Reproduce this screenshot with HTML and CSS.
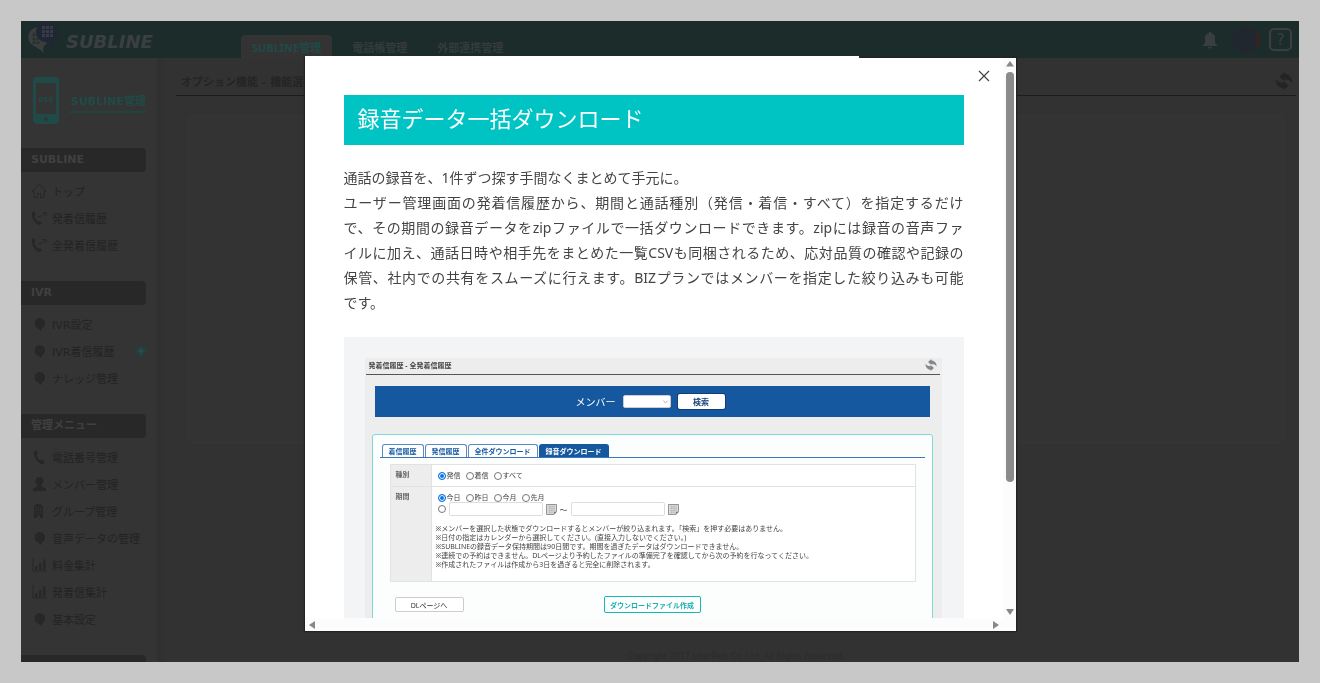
FILE: index.html
```html
<!DOCTYPE html>
<html lang="ja">
<head>
    <title>SUBLINE管理</title>
    <meta charset="UTF-8">
    <meta name="viewport" content="width=device-width, initial-scale=1.0">
    <link rel="stylesheet" href="styles.css">
</head>
<body>
    <!-- shared icons -->
    <svg class="defs" aria-hidden="true">
        <symbol id="i-home" viewBox="0 0 16 16"><path d="M1 8.500 8 1.500l7 7h-2v6H9.500v-4h-3v4H3v-6z" fill="none" stroke="currentColor"/></symbol>
        <symbol id="i-calls" viewBox="0 0 16 16"><path d="M1 2.500 3 1l1.500 3.500L3.300 6c.5 2.500 2 4.500 4 5.500l1.500-.5 2.200 2L9 15C4 14.500.5 8.500 1 2.500z" fill="currentColor"/><path d="M7 7l4-1 3-3M11.500 2.500H15V6" fill="none" stroke="currentColor"/></symbol>
        <symbol id="i-tel" viewBox="0 0 16 16"><path d="M3 2.500 5.500 1l1.500 3.500L5.700 6.500c.5 2 1.800 4 3.800 5l1.800-1 2.700 2.800-2.500 2C6.500 14.500 2 8 3 2.500z" fill="currentColor"/></symbol>
        <symbol id="i-pin" viewBox="0 0 16 16"><path d="M8.500 2a5.500 5.500 0 0 1 5.500 5.500c0 2.500-1.500 4-3 5L10 15l-3-2.500A5.500 5.500 0 0 1 8.500 2z" fill="currentColor"/></symbol>
        <symbol id="i-user" viewBox="0 0 16 16"><path d="M8.500 1c2.500 0 4 1.600 4 4 0 1.800-.8 3.200-1.800 4v1.500L15 12.500V15H2v-2.500l4.300-2V9c-1-.8-1.800-2.200-1.800-4 0-2.400 1.500-4 4-4z" fill="currentColor"/></symbol>
        <symbol id="i-building" viewBox="0 0 16 16"><path d="M5 1h5v1.500h2V15H9v-2.500H6V15H3V2.500h2z" fill="currentColor"/><path d="M4 5h7M4 7.500h7M4 10h7" stroke="#343434" stroke-dasharray="1.800 .8"/></symbol>
        <symbol id="i-chart" viewBox="0 0 16 16"><path d="M2 1v13h14" fill="none" stroke="currentColor"/><path d="M4 9h2.500v4H4zM8 6h2.500v7H8zM12 2.500h2.500V13H12z" fill="currentColor"/></symbol>
        <symbol id="i-sync" viewBox="0 0 16 16"><path d="M8.500 0v1.500C13 2 15.500 5 15.500 10c-1.500-2.500-3.500-3.500-7-3.500V8L4 4zM7.500 16v-1.500C3 14 .5 11 .5 6c1.500 2.500 3.500 3.500 7 3.500V8L12 12z" fill="currentColor"/></symbol>
        <symbol id="i-cal" viewBox="0 0 12 12"><path d="M.5.500h11v8l-3 3h-8z" fill="#ddd" stroke="#888"/><path d="M2 3h7M2 5h7M2 7h7M2 9h5M4 1v10M6.500 1v10M9 1v7" stroke="#aaa" stroke-width=".5"/><path d="M8.500 11.500v-3h3z" fill="#777"/></symbol>
    </svg>

    <div class="app">
        <header class="topbar">
            <a class="logo" href="#">
                <svg viewBox="0 0 32 34" width="32" height="34" aria-hidden="true">
                    <path d="M11 6a10 10 0 0 0-4 19c2 1 5 3 10 7-1-3-1-5 0-7a10 10 0 0 0 4-9z" fill="#3a3e3e"/>
                    <path d="M7 11v12M11 10v13M5 14h8M5 18h8M5 22h8" stroke="#24302f" stroke-width="1"/>
                    <path d="M20 1a11 10 0 0 1 8 17c-1 2-2 5-2 8-2-2-4-4-8-5A10 10 0 0 1 20 1z" fill="#202633"/>
                    <path d="M15 5h3v3h-3zm4 0h3v3h-3zm4 0h3v3h-3zm-8 4h3v3h-3zm4 0h3v3h-3zm4 0h3v3h-3zm-8 4h3v3h-3zm4 0h3v3h-3zm4 0h3v3h-3z" fill="#383d45"/>
                </svg>
                <span class="logo-text">SUBLINE</span>
            </a>
            <nav class="tabs">
                <a class="tab active" href="#">SUBLINE管理</a>
                <a class="tab" href="#">電話帳管理</a>
                <a class="tab" href="#">外部連携管理</a>
            </nav>
            <div class="tools">
                <button class="tool" aria-label="お知らせ">
                    <svg viewBox="0 0 16 18" width="16" height="18"><path d="M7 1h2v1c3 .5 4 3 4 5v5l2 2v1H1v-1l2-2V7c0-2 1-4.500 4-5zM6 16h4c0 2-4 2-4 0z" fill="#3a3e3e"/></svg>
                </button>
                <span class="avatar"></span>
                <button class="tool help" aria-label="ヘルプ">?</button>
            </div>
        </header>

        <div class="columns">
            <aside class="sidebar">
                <div class="profile">
                    <svg viewBox="0 0 26 47" width="26" height="47" aria-hidden="true">
                        <rect width="26" height="47" rx="4" fill="#1f4a48"/>
                        <rect x="3" y="6" width="20" height="31" fill="#343434"/>
                        <circle cx="13" cy="42" r="2" fill="#343434"/>
                        <text x="13" y="25" text-anchor="middle" class="phone-num">050</text>
                    </svg>
                    <a class="profile-name" href="#">SUBLINE管理</a>
                </div>

                <section class="menu">
                    <h2>SUBLINE</h2>
                    <ul>
                        <li><a href="#"><svg><use href="#i-home"/></svg>トップ</a></li>
                        <li><a href="#"><svg><use href="#i-calls"/></svg>発着信履歴</a></li>
                        <li><a href="#"><svg><use href="#i-calls"/></svg>全発着信履歴</a></li>
                    </ul>
                </section>
                <section class="menu">
                    <h2>IVR</h2>
                    <ul>
                        <li><a href="#"><svg><use href="#i-pin"/></svg>IVR設定</a></li>
                        <li><a href="#"><svg><use href="#i-pin"/></svg>IVR着信履歴</a><button class="plus" aria-label="開く"><svg viewBox="0 0 10 10"><circle cx="5" cy="5" r="5" fill="#1c4441"/><path d="M5 2v6M2 5h6" stroke="#454b4a"/></svg></button></li>
                        <li><a href="#"><svg><use href="#i-pin"/></svg>ナレッジ管理</a></li>
                    </ul>
                </section>
                <section class="menu">
                    <h2>管理メニュー</h2>
                    <ul>
                        <li><a href="#"><svg><use href="#i-tel"/></svg>電話番号管理</a></li>
                        <li><a href="#"><svg><use href="#i-user"/></svg>メンバー管理</a></li>
                        <li><a href="#"><svg><use href="#i-building"/></svg>グループ管理</a></li>
                        <li><a href="#"><svg><use href="#i-pin"/></svg>音声データの管理</a></li>
                        <li><a href="#"><svg><use href="#i-chart"/></svg>料金集計</a></li>
                        <li><a href="#"><svg><use href="#i-chart"/></svg>発着信集計</a></li>
                        <li><a href="#"><svg><use href="#i-pin"/></svg>基本設定</a></li>
                    </ul>
                </section>
                <section class="menu">
                    <h2></h2>
                </section>
            </aside>

            <main class="content">
                <div class="page-head">
                    <h1>オプション機能 - 機能選択</h1>
                    <svg class="sync"><use href="#i-sync"/></svg>
                </div>
                <div class="card"></div>
                <footer>Copyright 2017 InterPark Co.,Ltd. All Rights Reserved.</footer>
            </main>
        </div>
    </div>

    <div class="modal" role="dialog" aria-labelledby="modal-title">
        <div class="modal-body">
            <h2 class="modal-title" id="modal-title">録音データ一括ダウンロード</h2>
            <p class="lead">通話の録音を、1件ずつ探す手間なくまとめて手元に。</p>
            <p class="lead justified">ユーザー管理画面の発着信履歴から、期間と通話種別（発信・着信・すべて）を指定するだけ<br>で、その期間の録音データをzipファイルで一括ダウンロードできます。zipには録音の音声ファ<br>イルに加え、通話日時や相手先をまとめた一覧CSVも同梱されるため、応対品質の確認や記録の<br>保管、社内での共有をスムーズに行えます。BIZプランではメンバーを指定した絞り込みも可能</p>
            <p class="lead">です。</p>

            <div class="figure">
                <div class="shot">
                    <div class="shot-head">
                        <h3>発着信履歴 - 全発着信履歴</h3>
                        <svg><use href="#i-sync"/></svg>
                    </div>
                    <div class="search">
                        <label for="member">メンバー</label>
                        <span class="select"><select id="member"><option></option></select><svg viewBox="0 0 6 4"><path d="M.5.500 3 3 5.500.500" fill="none" stroke="#999"/></svg></span>
                        <button>検索</button>
                    </div>
                    <div class="panel">
                        <nav class="panel-tabs">
                            <a href="#">着信履歴</a>
                            <a href="#">発信履歴</a>
                            <a href="#">全件ダウンロード</a>
                            <a href="#" class="on">録音ダウンロード</a>
                        </nav>
                        <table>
                            <tr>
                                <th>種別</th>
                                <td>
                                    <div class="radios">
                                        <label><input type="radio" name="kind" checked>発信</label>
                                        <label><input type="radio" name="kind">着信</label>
                                        <label><input type="radio" name="kind">すべて</label>
                                    </div>
                                </td>
                            </tr>
                            <tr>
                                <th>期間</th>
                                <td>
                                    <div class="radios">
                                        <label><input type="radio" name="term" checked>今日</label>
                                        <label><input type="radio" name="term">昨日</label>
                                        <label><input type="radio" name="term">今月</label>
                                        <label><input type="radio" name="term">先月</label>
                                    </div>
                                    <div class="range">
                                        <input type="radio" name="term" aria-label="期間指定">
                                        <input type="text" aria-label="開始日">
                                        <svg><use href="#i-cal"/></svg>
                                        <span>～</span>
                                        <input type="text" aria-label="終了日">
                                        <svg><use href="#i-cal"/></svg>
                                    </div>
                                    <ul class="notes">
                                        <li>※メンバーを選択した状態でダウンロードするとメンバーが絞り込まれます。「検索」を押す必要はありません。</li>
                                        <li>※日付の指定はカレンダーから選択してください。(直接入力しないでください。)</li>
                                        <li>※SUBLINEの録音データ保持期間は90日間です。期間を過ぎたデータはダウンロードできません。</li>
                                        <li>※連続での予約はできません。DLページより予約したファイルの準備完了を確認してから次の予約を行なってください。</li>
                                        <li>※作成されたファイルは作成から3日を過ぎると完全に削除されます。</li>
                                    </ul>
                                </td>
                            </tr>
                        </table>
                        <div class="actions">
                            <button class="dl">DLページへ</button>
                            <button class="make">ダウンロードファイル作成</button>
                        </div>
                    </div>
                </div>
            </div>
        </div>
        <div class="vbar">
            <svg viewBox="0 0 8 6"><path d="M4 0 8 5.500H0z"/></svg>
            <div class="track"><div class="thumb"></div></div>
            <svg viewBox="0 0 8 6"><path d="M0 0h8L4 6z"/></svg>
        </div>
        <div class="hbar">
            <svg viewBox="0 0 6 8"><path d="M6 0v8L0 4z"/></svg>
            <svg viewBox="0 0 6 8"><path d="M0 0v8l6-4z"/></svg>
        </div>
        <button class="close" aria-label="閉じる"><svg viewBox="0 0 12 12"><path d="M1 1l10 10M11 1 1 11" stroke="#444" stroke-width="1.200"/></svg></button>
    </div>
</body>
</html>
```
FILE: styles.css
```css
* {
    box-sizing: border-box;
}
body {
    margin: 0;
    height: 100vh;
    padding: 21px;
    background: #c8c8c8;
    font-family: "Noto Sans", "Noto Sans CJK JP", sans-serif;
    overflow: hidden;
}
h1, h2, h3, p, ul {
    margin: 0;
    padding: 0;
}
ul {
    list-style: none;
}
a {
    color: inherit;
    text-decoration: none;
}
button {
    font-family: inherit;
    padding: 0;
    border: none;
    background: none;
    cursor: pointer;
}
svg {
    display: block;
    flex: none;
}
.defs {
    display: none;
}

/* app behind the dialog */
.app {
    height: 100%;
    display: flex;
    flex-direction: column;
    background: #323232;
    overflow: hidden;
    font-family: "DejaVu Sans", "Noto Sans CJK JP", sans-serif;
    font-size: 11px;
}
.topbar {
    flex: none;
    display: flex;
    height: 37px;
    background: #1c2c2b;
}
.logo {
    display: flex;
    width: 220px;
    padding-left: 6px;
    gap: 7px;
}
.logo-text {
    color: #3a4040;
    font-size: 18px;
    font-weight: bold;
    font-style: italic;
    line-height: 42px;
}
.tabs {
    display: flex;
    align-items: flex-end;
    flex: 1;
    font-family: "Noto Sans", "Noto Sans CJK JP", sans-serif;
}
.tab {
    height: 23px;
    padding: 0 15px;
    line-height: 25px;
    font-weight: bold;
    color: #343b3a;
}
.tab.active {
    margin-right: 5px;
    padding: 0 11px;
    border-radius: 4px 4px 0 0;
    background: #343333;
    color: #1f4a48;
}
.tools {
    display: flex;
    align-items: center;
    gap: 14px;
    padding-right: 7px;
}
.avatar {
    width: 28px;
    height: 28px;
    border-radius: 50%;
    background: linear-gradient(to right, #20272f 84%, #352424 84%);
}
.tool.help {
    width: 23px;
    height: 23px;
    margin-left: -5px;
    border: 2px solid #3a3e3e;
    border-radius: 5px;
    color: #3a3e3e;
    font-size: 16px;
    line-height: 18px;
}
.columns {
    flex: 1;
    display: flex;
    min-height: 0;
}
.sidebar {
    flex: none;
    width: 143px;
    padding-right: 11px;
    border-right: 7px solid #303030;
    background: #343434;
    overflow: hidden;
}
.profile {
    display: flex;
    height: 90px;
    padding: 19px 0 0 12px;
    gap: 10px;
}
.phone-num {
    font-size: 7px;
    font-weight: bold;
    fill: #1f4a48;
}
.profile-name {
    flex: 1;
    height: 17px;
    margin-top: 19px;
    padding-left: 2px;
    border-bottom: 2px solid #1f4543;
    color: #1f4a48;
    font-weight: bold;
    line-height: 11px;
    white-space: nowrap;
}
.menu {
    margin-bottom: 23px;
}
.menu h2 {
    height: 24px;
    margin-bottom: 5px;
    padding-left: 10px;
    border-radius: 0 4px 4px 0;
    background: #282828;
    color: #404040;
    font-size: 11px;
    line-height: 23px;
}
.menu li {
    display: flex;
    align-items: center;
    justify-content: space-between;
    height: 27px;
}
.menu a {
    display: flex;
    align-items: center;
    gap: 5px;
    padding-left: 10px;
    color: #232323;
    white-space: nowrap;
}
.menu a svg {
    width: 16px;
    height: 16px;
    color: #272727;
}
.plus svg {
    width: 10px;
    height: 10px;
}
.content {
    flex: 1;
    display: flex;
    flex-direction: column;
    padding: 0 3px 0 12px;
}
.page-head {
    display: flex;
    align-items: center;
    justify-content: space-between;
    height: 38px;
    padding: 8px 3px 0 5px;
    border-bottom: 1px solid #1c1c1c;
    color: #242424;
}
.page-head h1 {
    font-size: 11px;
}
.sync {
    width: 18px;
    height: 18px;
}
.card {
    height: 328px;
    margin: 19px 12px 0 11px;
    border: 1px solid #353535;
    border-radius: 4px;
    background: #333;
}
footer {
    margin-top: auto;
    color: #2b2b2b;
    font-size: 8px;
    line-height: 11px;
    text-align: center;
}

/* dialog */
.modal {
    position: fixed;
    top: 58px;
    bottom: 52px;
    left: 0;
    right: 0;
    width: min(711px, 90vw);
    margin: 0 auto;
    display: grid;
    grid-template-columns: 1fr 13px;
    grid-template-rows: 1fr 13px;
    background: #fff;
    box-shadow: 0 0 1px 1px #222;
}
.modal::before {
    content: "";
    position: absolute;
    top: -2px;
    left: 0;
    width: 78%;
    height: 2px;
    background: #fff;
}
.modal-body {
    min-height: 0;
    padding: 37px 39px 0;
    overflow: hidden;
}
.modal-title {
    margin-bottom: 20px;
    padding: 0 14px 4px;
    background: #00c4c4;
    color: #fff;
    font-size: 22px;
    font-weight: 400;
    line-height: 46px;
}
.lead {
    color: #444;
    font-size: 14px;
    line-height: 25px;
}
.justified {
    text-align: justify;
    text-align-last: justify;
}
.close {
    position: absolute;
    top: 12px;
    right: 26px;
}
.close svg {
    width: 12px;
    height: 12px;
}
.vbar {
    display: flex;
    flex-direction: column;
    align-items: center;
    padding: 3px 0 3px 1px;
    gap: 5px;
    background: #fcfcfc;
}
.vbar svg {
    width: 8px;
    height: 6px;
    fill: #888;
}
.track {
    flex: 1;
    width: 8px;
}
.thumb {
    height: 77%;
    border-radius: 4px;
    background: #8b8b8b;
}
.hbar {
    grid-column: 1 / 3;
    display: flex;
    align-items: center;
    justify-content: space-between;
    padding: 0 17px 0 4px;
    background: #fcfcfc;
}
.hbar svg {
    width: 6px;
    height: 8px;
    fill: #888;
}

/* download screen inside the dialog */
.figure {
    margin-top: 22px;
    padding: 21px 22px 0 21px;
    background: #f3f4f6;
}
.shot {
    padding: 0 2px 0 1px;
    background: #ededed;
    color: #444;
    font-size: 7px;
}
.shot-head {
    display: flex;
    align-items: center;
    justify-content: space-between;
    height: 17px;
    padding: 0 3px 2px;
    border-bottom: 1px solid #555;
}
.shot-head h3 {
    font-size: 7px;
}
.shot-head svg {
    width: 12px;
    height: 12px;
    color: #888;
}
.search {
    display: flex;
    align-items: center;
    justify-content: center;
    gap: 7px;
    height: 31px;
    margin: 11px 10px 0 9px;
    padding-right: 4px;
    background: #1658a0;
    color: #fff;
    font-size: 10px;
}
.select {
    position: relative;
}
.select svg {
    position: absolute;
    top: 5px;
    right: 3px;
    width: 5px;
    height: 4px;
}
.search select {
    display: block;
    appearance: none;
    width: 48px;
    height: 13px;
    border: 1px solid #ccc;
    border-radius: 2px;
    background: #fff;
}
.search button {
    width: 47px;
    height: 15px;
    border-radius: 2px;
    background: #fff;
    box-shadow: 0 0 0 1px #0f3f78;
    color: #16407a;
    font-size: 8px;
    font-weight: bold;
    line-height: 14px;
}
.panel {
    margin: 17px 7px 0 6px;
    padding: 9px 7px 20px;
    border: 1px solid #7fd9d5;
    border-radius: 3px;
    background: #fcfefd;
}
.panel-tabs {
    display: flex;
    gap: 1px;
    padding-left: 2px;
    border-bottom: 1px solid #3f74b5;
}
.panel-tabs a {
    height: 13px;
    padding: 0 6px;
    border: 1px solid #5b8ac2;
    border-bottom: none;
    border-radius: 3px 3px 0 0;
    background: #fff;
    color: #1658a0;
    font-weight: bold;
    line-height: 14px;
}
.panel-tabs a.on {
    border-color: #1658a0;
    background: #1658a0;
    color: #fff;
}
table {
    width: calc(100% - 19px);
    margin: 6px 9px 0 10px;
    border-collapse: collapse;
    background: #fff;
}
th, td {
    border: 1px solid #e2e2e2;
    text-align: left;
    vertical-align: top;
    line-height: 9px;
}
th {
    width: 41px;
    padding: 5px;
    background: #ededed;
    color: #666;
}
td {
    padding: 6px 4px;
}
.radios {
    display: flex;
    gap: 5px;
    padding-left: 2px;
}
.radios label {
    display: flex;
    align-items: center;
    gap: 1px;
}
input[type="radio"] {
    appearance: none;
    flex: none;
    width: 8px;
    height: 8px;
    margin: 0;
    border: 1px solid #777;
    border-radius: 50%;
    background: #fff;
}
input[type="radio"]:checked {
    border-color: #0a75e8;
    background: #0a75e8;
    box-shadow: inset 0 0 0 1px #fff;
}
.range {
    display: flex;
    align-items: center;
    gap: 3px;
    height: 14px;
    margin-bottom: 8px;
    padding-left: 2px;
}
.range input[type="text"] {
    width: 94px;
    height: 14px;
    padding: 0;
    border: 1px solid #ddd;
    border-radius: 2px;
}
.range span {
    font-size: 8px;
}
.range svg {
    width: 11px;
    height: 11px;
}
.notes {
    padding-bottom: 6px;
}
.notes li {
    white-space: nowrap;
}
.actions {
    display: flex;
    align-items: center;
    justify-content: space-between;
    margin-top: 14px;
    padding: 0 224px 0 15px;
}
.actions button {
    border-radius: 2px;
    background: #fff;
    font-size: 7px;
}
.dl {
    width: 69px;
    height: 15px;
    border: 1px solid #ccc;
    color: #333;
}
.make {
    width: 97px;
    height: 17px;
    border: 1px solid #17b8b8;
    color: #17b0b0;
    font-weight: bold;
}
```
